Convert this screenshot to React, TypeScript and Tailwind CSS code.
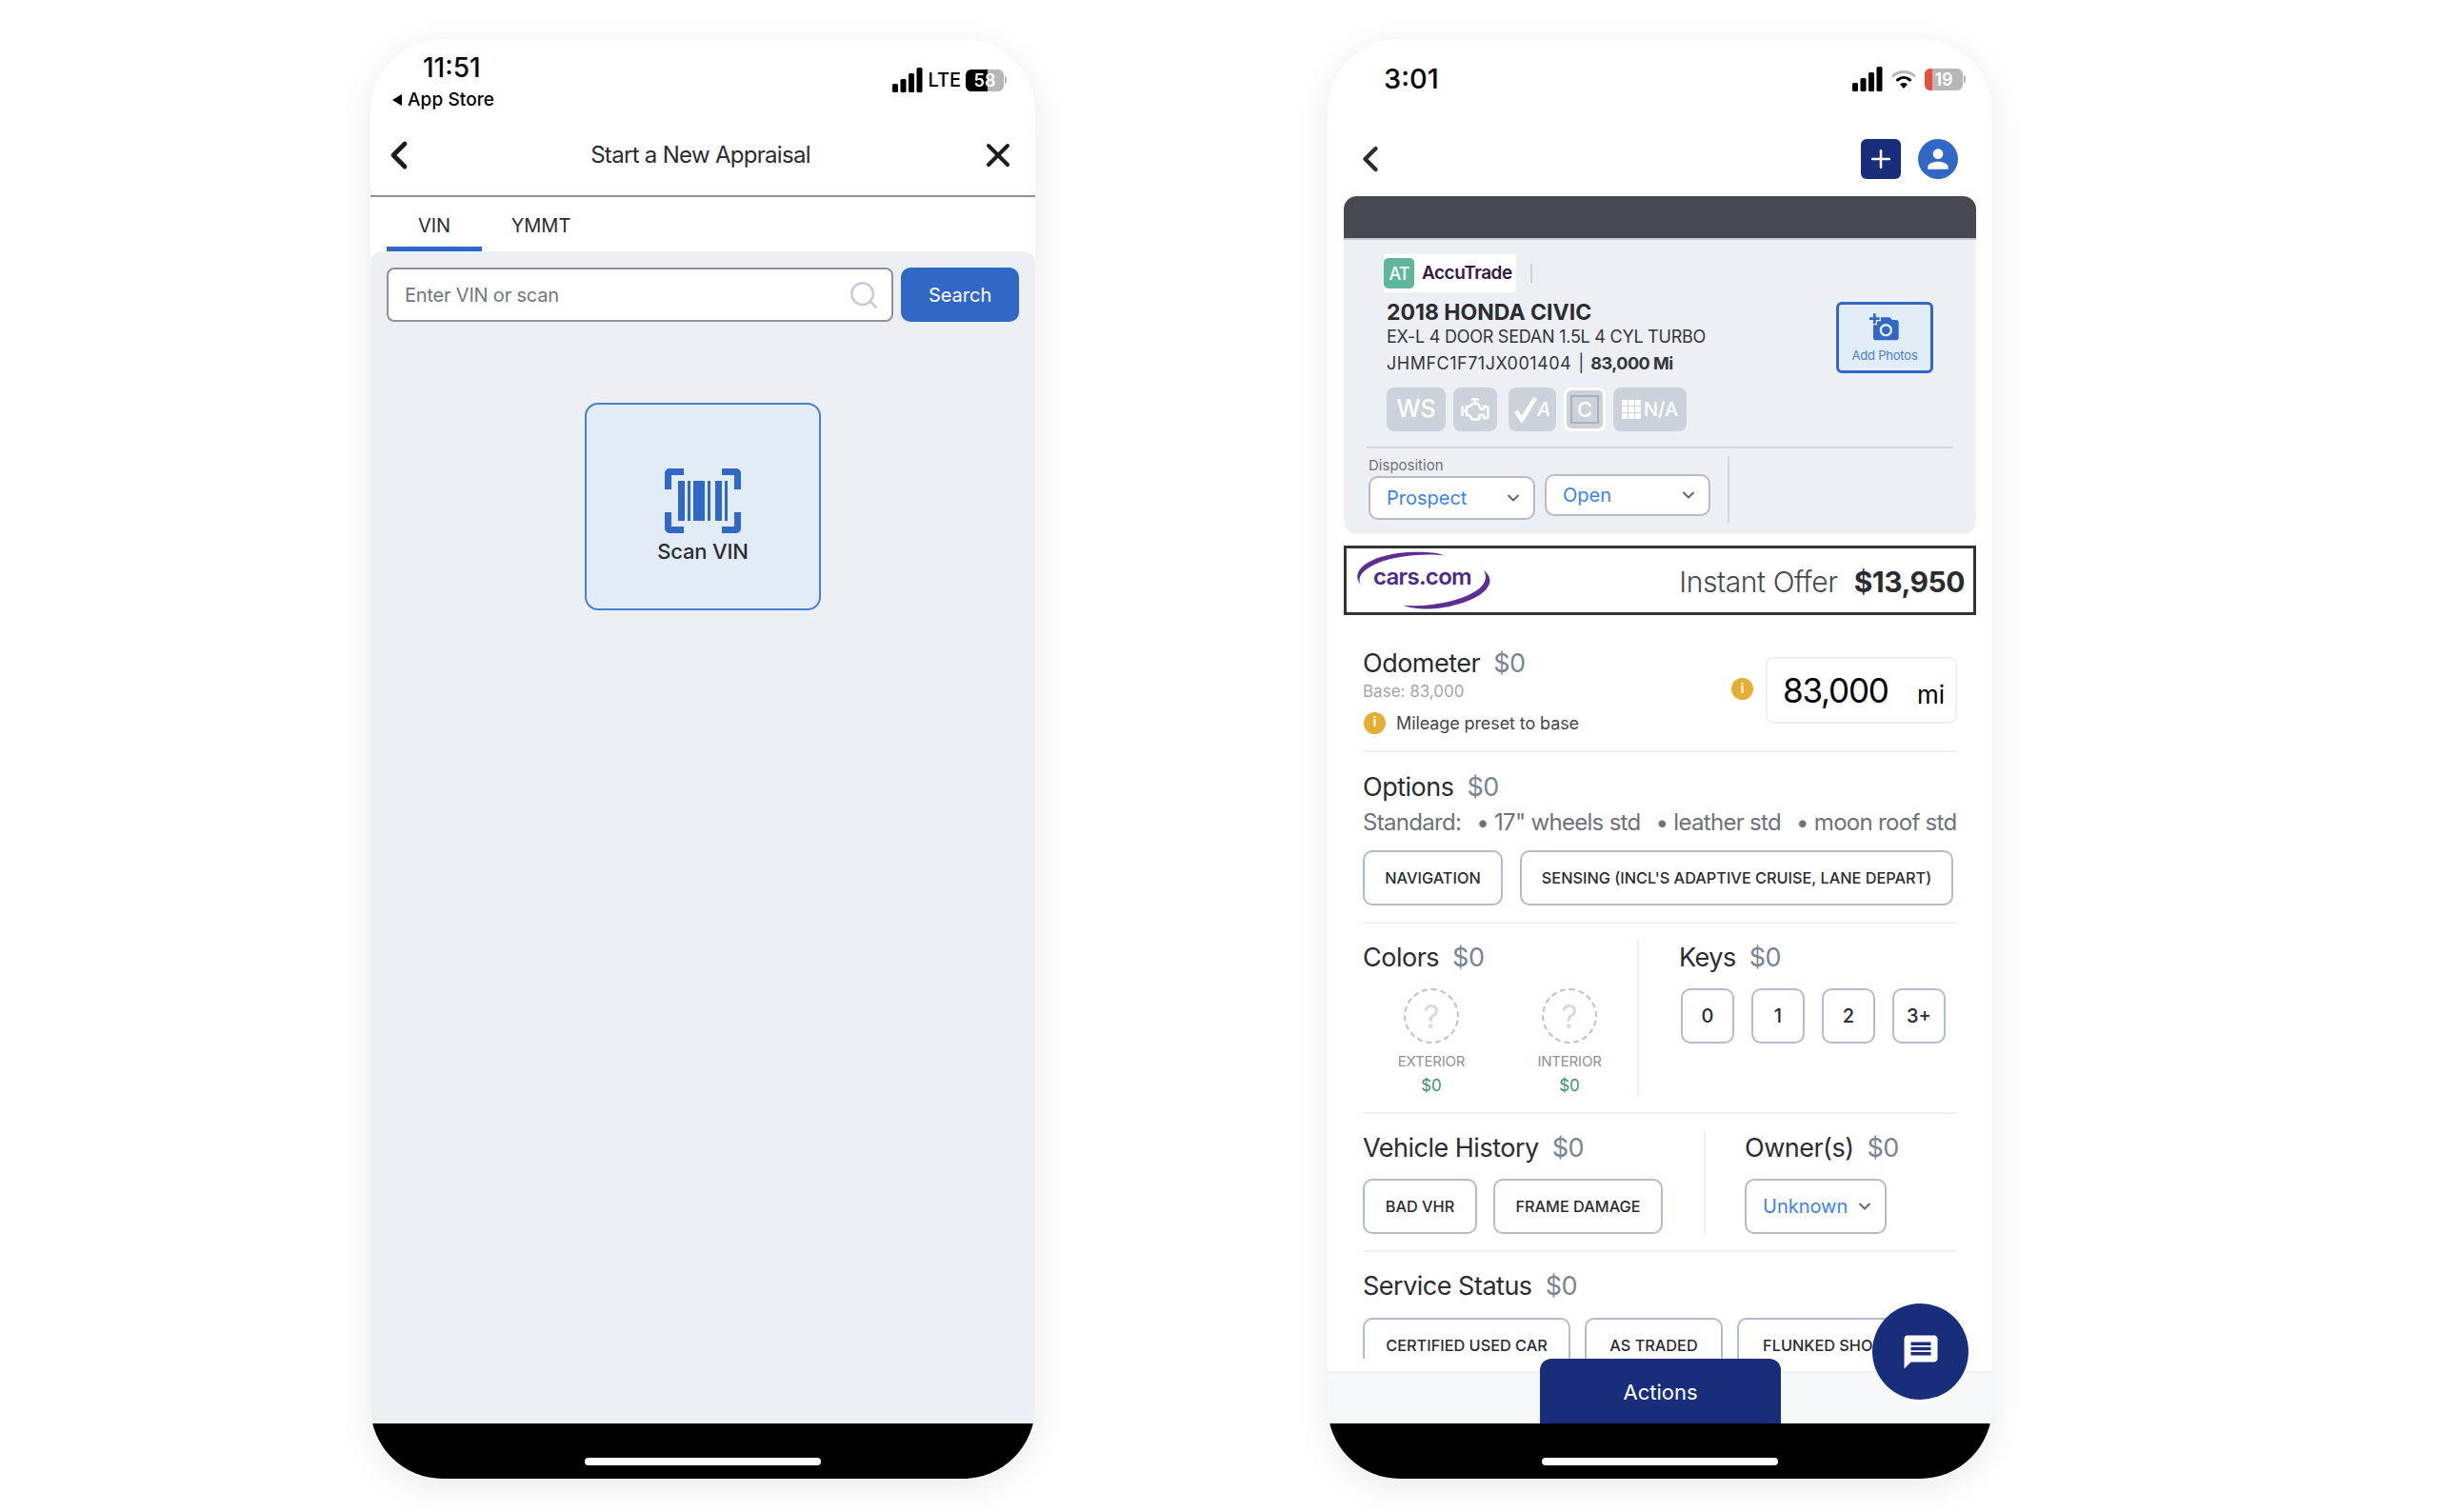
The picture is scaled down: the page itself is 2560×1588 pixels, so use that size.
import React from 'react';
import { ChevronDown, ChevronLeft, Plus, Search, X } from 'lucide-react';
import { MdAddAPhoto, MdMessage, MdPerson } from 'react-icons/md';
import { TbEngine } from 'react-icons/tb';

const SignalBars = () => (
  <svg width="32" height="26" viewBox="0 0 32 26" fill="#000">
    <rect x="0" y="17" width="6" height="9" rx="1.5" />
    <rect x="8.5" y="12" width="6" height="14" rx="1.5" />
    <rect x="17" y="6" width="6" height="20" rx="1.5" />
    <rect x="25.5" y="0" width="6" height="26" rx="1.5" />
  </svg>
);

const Wifi = () => (
  <svg width="26" height="22" viewBox="0 0 26 22" fill="none">
    <path d="M2 7.5C8 2 18 2 24 7.5" stroke="#b9b9b9" strokeWidth="3" strokeLinecap="round" />
    <path d="M6.5 12C10.5 8.5 15.5 8.5 19.5 12" stroke="#000" strokeWidth="3" strokeLinecap="round" />
    <path d="M13 21L9 16.5C11.5 14.6 14.5 14.6 17 16.5Z" fill="#000" />
  </svg>
);

const Battery = ({ level, fill, width }: { level: string; fill: string; width: string }) => (
  <div className="flex items-center gap-[1px]">
    <div className="relative h-[23px] w-[40px] overflow-hidden rounded-[6px] bg-[#b7b7b7]">
      <div className={`h-full ${width} ${fill}`} />
      <span className="absolute inset-0 flex items-center justify-center text-[18px] font-semibold text-white">{level}</span>
    </div>
    <div className="h-[8px] w-[2px] rounded-r bg-[#b7b7b7]" />
  </div>
);

const HomeBar = () => (
  <div className="flex h-[58px] shrink-0 justify-center bg-black pt-[36px]">
    <div className="h-[8px] w-[248px] rounded-full bg-white" />
  </div>
);

const InfoDot = ({ size }: { size: string }) => (
  <span className={`flex ${size} shrink-0 items-center justify-center rounded-full bg-[#e3ae36] text-[13px] font-bold text-white`}>i</span>
);

const Price = ({ label }: { label: string }) => (
  <div className="flex h-[26px] items-center gap-[14px] text-[27px] leading-none tracking-[-0.5px] text-[#2a2c30]">
    <span>{label}</span>
    <span className="text-[#7b8494]">$0</span>
  </div>
);

const OptionButton = ({ label, className = '' }: { label: string; className?: string }) => (
  <div className={`flex h-[58px] shrink-0 items-center justify-center rounded-[10px] border-2 border-[#b4bbc9] bg-white text-[16.3px] font-medium text-[#2a2c30] ${className}`}>
    {label}
  </div>
);

const Select = ({ label, className }: { label: string; className: string }) => (
  <div className={`flex shrink-0 items-center justify-between rounded-[10px] border-2 border-[#b4bbc9] bg-white pl-[17px] pr-[11px] text-[20px] text-[#3b82f0] ${className}`}>
    <span>{label}</span>
    <ChevronDown size={20} strokeWidth={2.2} className="text-[#5a6270]" />
  </div>
);

const Badge = ({ className = '', children }: { className?: string; children: React.ReactNode }) => (
  <div className={`flex h-[46px] items-center justify-center rounded-[8px] bg-[#ccd2da] font-medium text-white ${className}`}>{children}</div>
);

const ColorPick = ({ label }: { label: string }) => (
  <div className="flex w-[142px] flex-col items-center">
    <div className="flex h-[58px] w-[58px] items-center justify-center rounded-full border-2 border-dashed border-[#bcc2cc] text-[34px] text-[#d5dae2]">?</div>
    <div className="mt-[10px] h-[18px] text-[15px] leading-[18px] tracking-[-0.2px] text-[#8d929b]">{label}</div>
    <div className="mt-[6px] h-[20px] text-[17px] leading-[20px] text-[#3c9470]">$0</div>
  </div>
);

const BarcodeIcon = () => (
  <svg width="80" height="68" viewBox="0 0 80 68" fill="#3168c6">
    <path d="M0 22V5a5 5 0 0 1 5-5h15v7H7v15ZM80 22V5a5 5 0 0 0-5-5H60v7h13v15ZM0 46v17a5 5 0 0 0 5 5h15v-7H7V46ZM80 46v17a5 5 0 0 1-5 5H60v-7h13V46Z" />
    <rect x="14" y="13" width="7" height="42" />
    <rect x="24" y="13" width="3" height="42" />
    <rect x="30" y="13" width="12" height="42" />
    <rect x="45" y="13" width="3" height="42" />
    <rect x="53" y="13" width="7" height="42" />
    <rect x="63" y="13" width="3" height="42" />
  </svg>
);

const CarsLogo = () => (
  <div className="relative h-[62px] w-[160px] shrink-0">
    <svg width="172" height="64" viewBox="0 0 160 62" fill="none" className="absolute -left-[5px] -top-[1px]">
      <path d="M16 36C2 22 22 5 62 2C78 1 92 2 100 5C80 3 50 5 32 13C16 20 10 28 16 36Z" fill="#5f2d91" />
      <path d="M140 20C158 34 136 54 92 59C80 60 68 60 58 56C84 58 118 52 134 40C142 34 144 27 140 20Z" fill="#5f2d91" />
    </svg>
    <span className="absolute left-[27px] top-[9px] text-[24px] font-semibold tracking-[-0.7px] text-[#4b2a86]">cars.com</span>
  </div>
);

const AppraisalPhone = () => (
  <div className="flex h-[1512px] w-[698px] shrink-0 flex-col overflow-hidden rounded-[76px] bg-white shadow-[0_8px_36px_rgba(0,0,0,0.09)]">
    <div className="relative h-[86px] shrink-0">
      <div className="pl-[55px] pt-[13px] text-[28px] font-medium leading-[34px] text-black">11:51</div>
      <div className="mt-[5px] flex h-[24px] items-center gap-[6px] pl-[23px] text-[19px] font-medium tracking-[0.1px] text-black">
        <span className="h-0 w-0 border-y-[6px] border-r-[10px] border-y-transparent border-r-black" />
        App Store
      </div>
      <div className="absolute right-[30px] top-[28px] flex items-center gap-[5px]">
        <SignalBars />
        <span className="text-[20px] font-medium text-black">LTE</span>
        <Battery level="58" fill="bg-black" width="w-[58%]" />
      </div>
    </div>
    <div className="flex h-[80px] shrink-0 items-center justify-between border-b-2 border-[#8e9196] pb-[6px] pl-[6px] pr-[19px]">
      <ChevronLeft size={48} strokeWidth={2.4} className="text-[#1c1c1e]" />
      <span className="text-[24px] tracking-[-0.7px] text-[#2a2c30]">Start a New Appraisal</span>
      <X size={40} strokeWidth={2.4} className="text-[#1c1c1e]" />
    </div>
    <div className="flex h-[57px] shrink-0 pl-[17px]">
      <div className="flex w-[100px] items-center justify-center border-b-[5px] border-[#3168c6] pt-[8px] text-[20px] text-[#2a2c30]">VIN</div>
      <div className="ml-[16px] flex w-[92px] items-center justify-center pt-[3px] text-[20px] text-[#2a2c30]">YMMT</div>
    </div>
    <div className="flex flex-1 flex-col rounded-t-[12px] bg-[#eceff4] px-[17px] pt-[17px]">
      <div className="flex h-[57px] gap-[8px]">
        <div className="flex w-[533px] items-center justify-between rounded-[8px] border-2 border-[#8e9299] bg-white pl-[17px] pr-[12px]">
          <span className="text-[20px] tracking-[-0.2px] text-[#71767f]">Enter VIN or scan</span>
          <Search size={34} strokeWidth={1.8} className="text-[#c6ccd5]" />
        </div>
        <div className="flex w-[124px] items-center justify-center rounded-[10px] bg-[#3168c6] text-[20px] text-white">Search</div>
      </div>
      <div className="mt-[85px] flex h-[218px] w-[248px] flex-col items-center self-center rounded-[14px] border-2 border-[#4a80d0] bg-[#e2ecf6] pt-[67px]">
        <BarcodeIcon />
        <span className="mt-[3px] text-[22px] font-medium tracking-[-0.2px] text-[#2a2c30]">Scan VIN</span>
      </div>
    </div>
    <HomeBar />
  </div>
);

const VehicleCard = () => (
  <div className="mx-[17px] h-[355px] shrink-0 overflow-hidden rounded-[14px] bg-[#eceff4]">
    <div className="h-[46px] border-b-2 border-[#c3c7ce] bg-[#464950]" />
    <div className="flex justify-between pl-[42px] pr-[45px]">
      <div>
        <div className="mt-[15px] flex h-[40px] items-center">
          <div className="flex h-[40px] w-[139px] items-center gap-[8px] bg-white">
            <span className="flex h-[32px] w-[32px] items-center justify-center rounded-[5px] bg-[#5eb79a] text-[18px] font-medium tracking-[-1px] text-white">AT</span>
            <span className="text-[19px] font-semibold tracking-[-0.5px] text-[#35183f]">AccuTrade</span>
          </div>
          <div className="ml-[15px] h-[20px] w-[2px] bg-[#cfd3d9]" />
        </div>
        <div className="ml-[3px] mt-[7px] h-[28px] text-[23px] font-bold leading-[28px] text-[#2a2c30]">2018 HONDA CIVIC</div>
        <div className="ml-[3px] h-[24px] text-[18px] leading-[24px] tracking-[-0.25px] text-[#33363b]">EX-L 4 DOOR SEDAN 1.5L 4 CYL TURBO</div>
        <div className="ml-[3px] mt-[4px] h-[24px] text-[18px] leading-[24px] text-[#33363b]">
          <span className="tracking-[0.5px]">JHMFC1F71JX001404</span> <span className="mx-[2px]">|</span>{' '}
          <span className="font-bold tracking-[-0.5px]">83,000 Mi</span>
        </div>
      </div>
      <div className="mt-[65px] flex h-[75px] w-[102px] flex-col items-center rounded-[6px] border-[3px] border-[#3168c6] bg-[#e2ecf6] pt-[8px]">
        <MdAddAPhoto size={32} className="text-[#3168c6]" />
        <span className="mt-[4px] text-[13px] tracking-[-0.2px] text-[#4a80d0]">Add Photos</span>
      </div>
    </div>
    <div className="ml-[45px] mt-[13px] flex gap-[8px]">
      <Badge className="w-[62px] text-[25px]">WS</Badge>
      <Badge className="w-[46px]"><TbEngine size={36} strokeWidth={1.6} /></Badge>
      <Badge className="ml-[4px] w-[50px] text-[20px] font-bold italic">
        <svg width="24" height="28" viewBox="0 0 24 28" fill="none">
          <path d="M2 16L8 25L22 2" stroke="#fff" strokeWidth="4.5" />
        </svg>
        A
      </Badge>
      <Badge className="w-[44px] border-[3px] border-white text-[22px] font-bold"><span className="flex h-[30px] w-[30px] items-center justify-center border-2 border-[#a9b0ba]">C</span></Badge>
      <Badge className="w-[77px] gap-[3px] text-[20px]">
        <span className="grid grid-cols-3 gap-[1px]">
          {[...Array(9)].map((_, i) => (
            <span key={i} className="h-[6px] w-[6px] bg-white" />
          ))}
        </span>
        N/A
      </Badge>
    </div>
    <div className="mx-[24px] mt-[16px] h-[2px] bg-[#d3d7dd]" />
    <div className="ml-[26px] mt-[8px] flex h-[70px] items-stretch">
      <div className="w-[377px]">
        <div className="mb-[1px] h-[20px] text-[15px] leading-[20px] text-[#6d727a]">Disposition</div>
        <div className="flex items-start gap-[10px]">
          <Select label="Prospect" className="h-[46px] w-[175px]" />
          <Select label="Open" className="-mt-[2px] h-[44px] w-[174px]" />
        </div>
      </div>
      <div className="w-[2px] bg-[#d3d7dd]" />
    </div>
  </div>
);

const DetailPhone = () => (
  <div className="relative flex h-[1512px] w-[698px] shrink-0 flex-col overflow-hidden rounded-[76px] bg-white shadow-[0_8px_36px_rgba(0,0,0,0.09)]">
    <div className="flex h-[82px] shrink-0 items-center justify-between pl-[59px] pr-[28px] pt-[2px]">
      <span className="text-[29px] font-medium text-black">3:01</span>
      <div className="flex items-center gap-[9px]">
        <SignalBars />
        <Wifi />
        <Battery level="19" fill="bg-[#e8503a]" width="w-[20%]" />
      </div>
    </div>
    <div className="flex h-[83px] shrink-0 items-center justify-between pl-[23px] pr-[36px] pt-[5px]">
      <ChevronLeft size={44} strokeWidth={2.4} className="text-[#2a2c30]" />
      <div className="flex items-center gap-[18px]">
        <div className="flex h-[42px] w-[42px] items-center justify-center rounded-[6px] bg-[#182e7b]">
          <Plus size={30} strokeWidth={2} className="text-white" />
        </div>
        <div className="flex h-[42px] w-[42px] items-center justify-center rounded-full bg-[#3168c6]">
          <MdPerson size={32} className="text-white" />
        </div>
      </div>
    </div>
    <div className="flex flex-1 flex-col overflow-hidden">
      <VehicleCard />
      <div className="mx-[17px] mt-[12px] flex h-[73px] shrink-0 items-center justify-between border-[3px] border-[#333] pl-[1px] pr-[9px]">
        <CarsLogo />
        <div className="mt-[2px] flex items-baseline gap-[17px] text-[30px] leading-none">
          <span className="font-light tracking-[-0.4px] text-[#44474c]">Instant Offer</span>
          <span className="font-bold tracking-[-0.5px] text-[#2a2c30]">$13,950</span>
        </div>
      </div>
      <div className="mx-[37px] shrink-0">
        <section className="flex h-[144px] justify-between border-b-2 border-[#eef0f4] pt-[37px]">
          <div>
            <Price label="Odometer" />
            <div className="mt-[7px] h-[20px] text-[17px] leading-[20px] text-[#a3a7ae]">Base: 83,000</div>
            <div className="mt-[11px] flex h-[24px] items-center gap-[11px] pl-[1px] text-[18px] tracking-[-0.1px] text-[#44474c]">
              <InfoDot size="h-[23px] w-[23px]" />
              Mileage preset to base
            </div>
          </div>
          <div className="flex items-start">
            <div className="mr-[13px] mt-[29px]"><InfoDot size="h-[23px] w-[23px]" /></div>
            <div className="mt-[7px] flex h-[70px] w-[201px] items-center justify-between rounded-[8px] border-2 border-[#eef0f4] pl-[16px] pr-[11px]">
              <span className="text-[35px] tracking-[-1.2px] text-black">83,000</span>
              <span className="mt-[8px] text-[26px] text-black">mi</span>
            </div>
          </div>
        </section>
        <section className="border-b-2 border-[#eef0f4] pb-[17px] pt-[23px]">
          <Price label="Options" />
          <div className="mt-[10px] flex h-[30px] items-center whitespace-nowrap text-[24px] leading-[30px] tracking-[-0.7px] text-[#6d727a]">
            <span>Standard:</span>
            <span className="ml-[16px]">• 17" wheels std</span>
            <span className="ml-[16px]">• leather std</span>
            <span className="ml-[16px]">• moon roof std</span>
          </div>
          <div className="mt-[14px] flex gap-[18px]">
            <OptionButton label="NAVIGATION" className="w-[147px]" />
            <OptionButton label="SENSING (INCL'S ADAPTIVE CRUISE, LANE DEPART)" className="w-[455px]" />
          </div>
        </section>
        <section className="flex border-b-2 border-[#eef0f4] pb-[17px] pt-[16px]">
          <div className="h-[165px] w-[290px] border-r-2 border-[#eef0f4] pt-[6px]">
            <Price label="Colors" />
            <div className="ml-[1px] mt-[20px] flex gap-[3px]">
              <ColorPick label="EXTERIOR" />
              <ColorPick label="INTERIOR" />
            </div>
          </div>
          <div className="pl-[42px] pt-[6px]">
            <Price label="Keys" />
            <div className="ml-[2px] mt-[20px] flex gap-[18px]">
              {['0', '1', '2', '3+'].map((k) => (
                <OptionButton key={k} label={k} className="w-[56px] text-[20px]" />
              ))}
            </div>
          </div>
        </section>
        <section className="flex border-b-2 border-[#eef0f4] pb-[16px] pt-[18px]">
          <div className="h-[109px] w-[360px] border-r-2 border-[#eef0f4] pt-[4px]">
            <Price label="Vehicle History" />
            <div className="mt-[20px] flex gap-[17px]">
              <OptionButton label="BAD VHR" className="w-[120px]" />
              <OptionButton label="FRAME DAMAGE" className="w-[178px]" />
            </div>
          </div>
          <div className="pl-[41px] pt-[4px]">
            <Price label="Owner(s)" />
            <Select label="Unknown" className="mt-[20px] h-[58px] w-[149px]" />
          </div>
        </section>
        <section className="pt-[22px]">
          <Price label="Service Status" />
          <div className="mt-[21px] flex gap-[15px]">
            <OptionButton label="CERTIFIED USED CAR" className="w-[218px]" />
            <OptionButton label="AS TRADED" className="w-[145px]" />
            <OptionButton label="FLUNKED SHOP" className="w-[180px]" />
          </div>
        </section>
      </div>
    </div>
    <div className="h-[13px] shrink-0 bg-white" />
    <div className="h-[55px] shrink-0 border-t-2 border-[#eef0f4] bg-[#f7f8fa]" />
    <HomeBar />
    <div className="absolute bottom-[58px] left-[223px] flex h-[68px] w-[253px] items-center justify-center rounded-t-[12px] bg-[#182e7b] pt-[2px] text-[22px] text-white">
      Actions
    </div>
    <div className="absolute bottom-[83px] right-[25px] flex h-[101px] w-[101px] items-center justify-center rounded-full bg-[#182e7b]">
      <MdMessage size={42} className="text-white" />
    </div>
  </div>
);

export default function App() {
  return (
    <div className="flex min-h-[1588px] w-[2560px] gap-[307px] bg-white pl-[389px] pt-[41px] font-[Inter,sans-serif]">
      <AppraisalPhone />
      <DetailPhone />
    </div>
  );
}
